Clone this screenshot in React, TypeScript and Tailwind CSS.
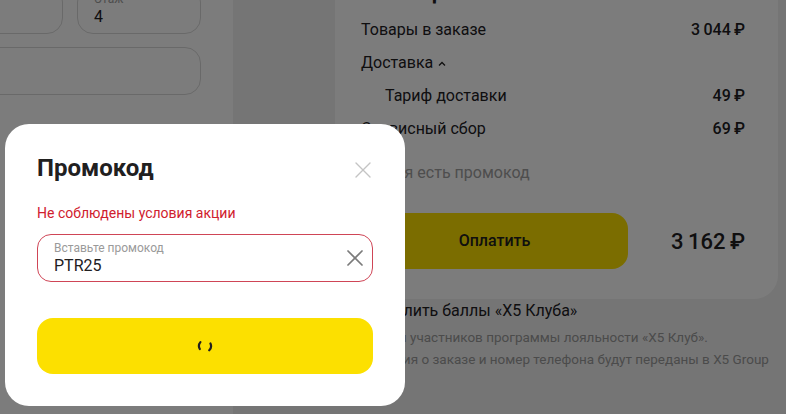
import { X } from 'lucide-react'

const font = { fontFamily: 'Roboto, "Noto Sans", sans-serif' }

const rows = [
  { label: 'Товары в заказе', value: '3\u2009044\u2009₽', indent: false },
  { label: 'Доставка', value: '', indent: false, toggle: true },
  { label: 'Тариф доставки', value: '49\u2009₽', indent: true },
  { label: 'Сервисный сбор', value: '69\u2009₽', indent: false },
]

function Spinner() {
  return (
    <svg width="16" height="16" viewBox="0 0 16 16">
      <path d="M2.8 11 A6 6 0 0 1 3.4 4.14" fill="none" stroke="#21201f" strokeWidth="2.2" strokeLinecap="round" />
      <path d="M13.44 5.46 A6 6 0 0 1 12.24 12.24" fill="none" stroke="#21201f" strokeWidth="2.2" strokeLinecap="round" />
    </svg>
  )
}

export default function App() {
  return (
    <div className="relative h-[414px] w-[786px] overflow-hidden bg-[#f1f1f1] text-[#21201f]" style={font}>
      {/* page underneath */}
      <div className="flex h-full">
        {/* left form card */}
        <div className="w-[233px] shrink-0 bg-white pr-[32px]">
          <div className="mt-[-14px] flex gap-[14px]">
            <div className="ml-[-60px] h-[48px] w-[123px] rounded-[16px] border border-[#d9d9d9]" />
            <div className="h-[48px] flex-1 rounded-[16px] border border-[#d9d9d9] px-[16px] pt-[4px]">
              <div className="text-[12px] leading-[16px] text-[#9e9e9e]">Этаж</div>
              <div className="text-[16px] leading-[20px]">4</div>
            </div>
          </div>
          <div className="ml-[-40px] mt-[13px] h-[48px] rounded-[16px] border border-[#d9d9d9]" />
        </div>

        {/* right column */}
        <div className="flex-1 pl-[102px] pr-[8px]">
          <div className="mt-[-35px] rounded-b-[24px] bg-white pb-[30px] pl-[26px] pr-[33px] pt-[14px]">
            <div className="text-[22px] font-bold leading-[28px]">Что в цене</div>
            <div className="mt-[6px]">
              {rows.map((r) => (
                <div key={r.label} className="flex h-[33px] items-center justify-between text-[16px]">
                  <span className={`flex items-center gap-[4px] ${r.indent ? 'pl-[24px]' : ''}`}>
                    {r.label}
                    {r.toggle && (
                      <svg width="10" height="10" viewBox="0 0 10 10" className="mt-[2px]">
                        <path d="M2 6.5 L5 3.5 L8 6.5" fill="none" stroke="#21201f" strokeWidth="1.3" />
                      </svg>
                    )}
                  </span>
                  <span className="font-medium">{r.value}</span>
                </div>
              ))}
            </div>
            <div className="mt-[16px] text-[16px] leading-[24px] text-[#a0a0a0]">У меня есть промокод</div>
            <div className="mt-[28px] flex items-center justify-between">
              <div className="flex h-[56px] w-[267px] items-center justify-center rounded-[16px] bg-[#fce000] text-[16px] font-medium">
                Оплатить
              </div>
              <div className="text-[22px] font-medium">{'3\u2009162\u2009₽'}</div>
            </div>
          </div>
          <div className="flex items-center gap-[6px] text-[16px] leading-[24px]">
            <span className="h-[16px] w-[16px] rounded-[4px] border border-[#cfcfcf]" />
            Начислить баллы «X5 Клуба»
          </div>
          <div className="mt-[3px] text-[13.5px] leading-[22px] text-[#9a9a9a]">
            <div>Только для участников программы лояльности «X5 Клуб».</div>
            <div>Информация о заказе и номер телефона будут переданы в X5 Group</div>
          </div>
        </div>
      </div>

      {/* overlay */}
      <div className="absolute inset-0 bg-black/[0.515]" />

      {/* modal */}
      <div className="absolute left-[5px] top-[124px] w-[400px] rounded-[24px] bg-white px-[32px] pb-[32px] pt-[28px]">
        <div className="flex h-[32px] items-center justify-between">
          <h2 className="text-[24px] font-bold leading-[32px]">Промокод</h2>
          <X className="mr-[-4px] mt-[4px] h-[28px] w-[28px] text-[#c4c4c4]" strokeWidth={1.2} />
        </div>
        <div className="mt-[19px] text-[14px] leading-[20px] text-[#d0202e]">Не соблюдены условия акции</div>
        <div className="mt-[11px] flex h-[48px] items-center justify-between rounded-[14px] border border-[#cf4556] pl-[16px] pr-[3px]">
          <div>
            <div className="text-[12px] leading-[16px] text-[#9a9a9a]">Вставьте промокод</div>
            <div className="text-[16px] leading-[20px]">PTR25</div>
          </div>
          <X className="h-[28px] w-[28px] text-[#7b7b7b]" strokeWidth={1.5} />
        </div>
        <div className="mt-[36px] flex h-[56px] items-center justify-center rounded-[16px] bg-[#fce000]">
          <Spinner />
        </div>
      </div>
    </div>
  )
}
